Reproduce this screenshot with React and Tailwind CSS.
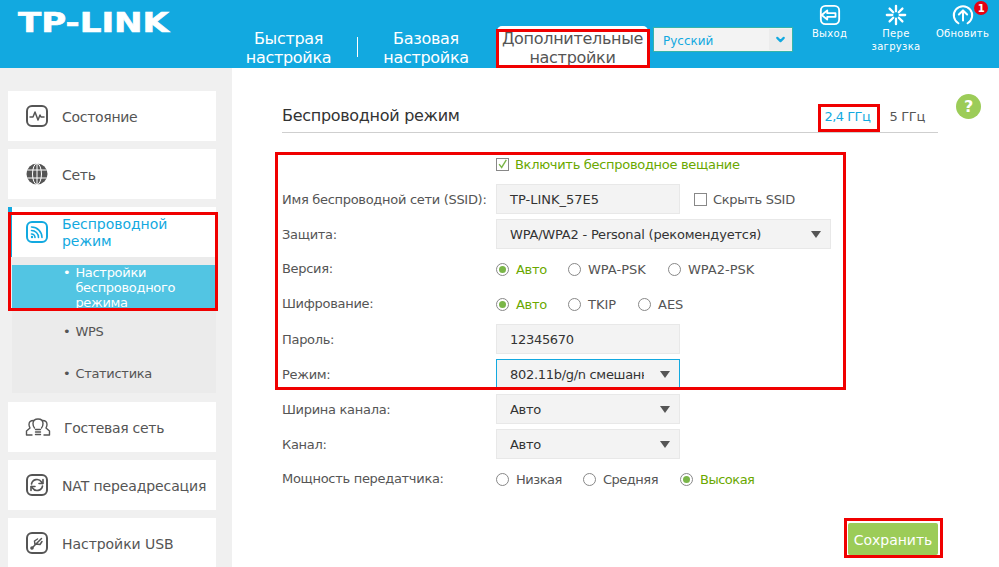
import { ChevronDown } from 'lucide-react'

const IconBox = ({ size = 24, className = '', children }) => (
  <svg width={size} height={size} viewBox="0 0 24 24" fill="none" stroke="currentColor" strokeWidth="2" strokeLinecap="round" strokeLinejoin="round" className={className}>
    {children}
  </svg>
)

const StatusIcon = () => (
  <IconBox>
    <rect x="2" y="2" width="20" height="20" rx="5" />
    <path d="M5 13h3l2-5 3 8 2-5 1 2h3" strokeWidth="1.5" />
  </IconBox>
)

const GlobeIcon = () => (
  <IconBox>
    <circle cx="12" cy="12" r="10.500" fill="currentColor" stroke="none" />
    <g stroke="#fff" strokeWidth="1">
      <ellipse cx="12" cy="12" rx="4.500" ry="10.500" />
      <path d="M12 1.500v21M2.500 8h19M2.500 16h19" />
    </g>
  </IconBox>
)

const WifiIcon = () => (
  <IconBox>
    <rect x="2" y="2" width="20" height="20" rx="5" />
    <path d="M6.500 10.500a7 7 0 0 1 7 7M6.500 7a10.500 10.500 0 0 1 10.500 10.500M6.500 14a3.500 3.500 0 0 1 3.500 3.500" strokeWidth="1.600" />
    <circle cx="7" cy="17" r="1.200" fill="currentColor" stroke="none" />
  </IconBox>
)

const GuestIcon = () => (
  <svg width="26" height="18" viewBox="0 0 26 18" fill="none" stroke="currentColor" strokeWidth="1.400" strokeLinecap="round" strokeLinejoin="round">
    <path d="M9.500 10C8.500 9 8 7.500 8 5.500 8 2.500 10 1 13 1s5 1.500 5 4.500c0 2-.5 3.500-1.500 4.500" />
    <path d="M8.500 2.500C5.500 2.500 4 4 4 6.500c0 1.500.5 2.500 1 3.500L1.500 13v4H7" />
    <path d="M17.500 2.500c3 0 4.500 1.500 4.500 4 0 1.500-.5 2.500-1 3.500l3.500 3v4H19" />
    <path d="M10.500 11.500h5M10.500 14h5M10.500 16.500h5" />
  </svg>
)

const NatIcon = () => (
  <IconBox>
    <rect x="2" y="2" width="20" height="20" rx="5" />
    <path d="M6.500 11a5.500 5.500 0 0 1 10-2l1 1.500M17.500 13a5.500 5.500 0 0 1-10 2l-1-1.500" strokeWidth="1.600" />
    <path d="M18 6.500v4h-4M6 17.500v-4h4" strokeWidth="1.600" />
  </IconBox>
)

const UsbIcon = () => (
  <IconBox>
    <rect x="2" y="2" width="20" height="20" rx="5" />
    <path d="M6.500 17.500 16.500 7.500M10 14l-.5-4 3-2M11 13l4 .5 2-3" strokeWidth="1.500" />
    <circle cx="7" cy="17" r="1.800" fill="currentColor" stroke="none" />
  </IconBox>
)

const menuItems = [
  { label: 'Состояние', icon: StatusIcon },
  { label: 'Сеть', icon: GlobeIcon },
]

const menuItemsBottom = [
  { label: 'Гостевая сеть', icon: GuestIcon, gap: 'ml-[13px]' },
  { label: 'NAT переадресация', icon: NatIcon, gap: 'ml-[13px] tracking-[-0.12px]' },
  { label: 'Настройки USB', icon: UsbIcon, gap: 'ml-[13px] tracking-[-0.05px]' },
]

function MenuItem({ item }) {
  const Icon = item.icon
  return (
    <div className="flex items-center h-[50px] mb-[8px] bg-white pl-[17px] ml-[8px] text-[#555]">
      <Icon />
      <span className={`${item.gap || 'ml-[13px]'} text-[14px] pt-[2px]`}>{item.label}</span>
    </div>
  )
}

function Sidebar() {
  return (
    <aside className="w-[232px] shrink-0 bg-[#f0f0f0] pt-[23px] pr-[16px]">
      {menuItems.map((item) => <MenuItem key={item.label} item={item} />)}
      <div className="ml-[8px] mb-[9px]">
        <div className="flex items-center h-[50px] bg-white border-l-4 border-[#12a9e0] pl-[13px] text-[#12a9e0]">
          <WifiIcon />
          <span className="ml-[13px] text-[14px] leading-[17px] tracking-[-0.05px] pt-[2px]">Беспроводной<br />режим</span>
        </div>
        <div className="ml-[4px] h-[136px] bg-[#ebebeb] pt-[8px] text-[13px] text-[#555]">
          <div className="flex h-[46px] bg-[#52c5e3] text-white pl-[51px] leading-[15px]">
            <span className="mr-[5px]">•</span>
            <span>Настройки<br />беспроводного<br />режима</span>
          </div>
          <div className="flex items-center h-[42px] pl-[51px]"><span className="mr-[5px]">•</span>WPS</div>
          <div className="flex items-center h-[42px] pl-[51px]"><span className="mr-[5px]">•</span>Статистика</div>
        </div>
      </div>
      {menuItemsBottom.map((item) => <MenuItem key={item.label} item={item} />)}
    </aside>
  )
}

function Field({ label, raised, children }) {
  return (
    <div className="flex items-center h-[35px]">
      <div className={`w-[214px] shrink-0 text-[13px] text-[#555] ${raised ? 'pb-[2px]' : ''}`}>{label}</div>
      {children}
    </div>
  )
}

function Input({ value, className = '' }) {
  return (
    <div className={`flex items-center w-[184px] h-[30px] mb-[1px] bg-[#f3f3f3] border border-[#e8e8e8] pl-[13px] pt-[2px] text-[13px] text-[#333] ${className}`}>
      {value}
    </div>
  )
}

function Select({ value, wide, focused }) {
  return (
    <div className={`flex items-center justify-between h-[30px] mb-[1px] bg-[#f3f3f3] border pl-[13px] pr-[9px] text-[13px] text-[#333] ${wide ? 'w-[335px] tracking-[-0.2px]' : 'w-[184px]'} ${focused ? 'border-[#12a9e0]' : 'border-[#e8e8e8]'}`}>
      <span className={`overflow-hidden whitespace-nowrap pt-[2px] ${wide ? '' : 'w-[134px]'}`}>{value}</span>
      <span className="w-0 h-0 border-x-[5.500px] border-x-transparent border-t-[7px] border-t-[#555]" />
    </div>
  )
}

function Radio({ label, checked, className = '' }) {
  return (
    <div className={`flex items-center text-[13px] ${checked ? 'text-[#6aa800]' : 'text-[#555]'} ${className}`}>
      <span className="flex items-center justify-center w-[13px] h-[13px] rounded-full border border-[#888] bg-white mr-[7px]">
        {checked && <span className="w-[7px] h-[7px] rounded-full bg-[#7ab648]" />}
      </span>
      {label}
    </div>
  )
}

function Header() {
  return (
    <header className="relative flex h-[68px] bg-[#12a9e0] text-white">
      <div className="w-[232px] pl-[18px] pt-[4px]">
        <span className="block origin-left scale-x-[1.31] font-bold text-[26px] leading-[38px] tracking-normal whitespace-nowrap [-webkit-text-stroke:0.6px_white]">TP-LINK</span>
      </div>
      <nav className="flex items-end text-[16px] leading-[19px] text-center">
        <div className="w-[113px] pb-[1px]">Быстрая<br />настройка</div>
        <div className="w-px h-[20px] ml-[12px] bg-white mb-[11px]" />
        <div className="w-[136px] pb-[1px]">Базовая<br />настройка</div>
        <div className="w-[151px] h-[42px] ml-[3px] bg-white text-[#555] rounded-t-[5px] pt-[3px]">Дополнительные<br />настройки</div>
      </nav>
      <div className="flex items-center justify-between w-[140px] h-[25px] mt-[27px] ml-[5px] bg-[#f3f3f3] border border-[#37b4a8] pl-[9px] text-[12px] tracking-normal text-[#12a9e0]">
        <span className="pt-[2px]">Русский</span>
        <span className="flex items-center justify-center w-[23px] h-[21px] bg-[#ececec]">
          <ChevronDown size={13} strokeWidth={4} />
        </span>
      </div>
      <div className="flex text-[10px] leading-[13px] text-center tracking-[0.3px]">
        <div className="w-[73px] pt-[4px] flex flex-col items-center">
          <IconBox size={22}>
            <rect x="2" y="2" width="20" height="20" rx="5" />
            <path d="M3 12l6-5v3h9v4H9v3z" fill="#12a9e0" />
          </IconBox>
          <span className="mt-[1px]">Выход</span>
        </div>
        <div className="w-[60px] pt-[4px] flex flex-col items-center">
          <IconBox size={22}>
            <path strokeWidth="2.500" d="M12 2v6M12 16v6M2 12h6M16 12h6M5 5l4 4M15 15l4 4M19 5l-4 4M9 15l-4 4" />
          </IconBox>
          <span className="mt-[1px]">Пере<br />загрузка</span>
        </div>
        <div className="w-[73px] pt-[4px] flex flex-col items-center">
          <IconBox size={22}>
            <path strokeWidth="2.200" d="M7 21a10 10 0 1 1 10 0" />
            <path strokeWidth="2.200" d="M12 18V7M7.500 11.500 12 7l4.500 4.500" />
          </IconBox>
          <span className="mt-[1px]">Обновить</span>
        </div>
      </div>
      <span className="absolute left-[974px] top-[1px] flex items-center justify-center w-[14px] h-[14px] rounded-full bg-[#e60012] text-[10px] font-bold">1</span>
    </header>
  )
}

function Main() {
  return (
    <main className="relative flex-1 pl-[50px] pr-[61px] pt-[32px]">
      <div className="flex items-center justify-between h-[33px] border-b border-[#cfcfcf]">
        <h1 className="text-[16px] text-[#333]">Беспроводной режим</h1>
        <div className="flex items-center text-[13px] pt-[2px] pr-[13px]">
          <span className="text-[#12a9e0] tracking-[-0.5px]">2,4 ГГц</span>
          <span className="w-px h-[11px] bg-[#6a6ad0] mx-[9px]" />
          <span className="text-[#555]">5 ГГц</span>
        </div>
      </div>
      <span className="absolute left-[724px] top-[26px] flex items-center justify-center w-[25px] h-[25px] rounded-full bg-[#9ccc58] text-white font-bold text-[16px]">?</span>

      <div className="mt-[14px]">
        <Field>
          <div className="flex items-center text-[13px] text-[#6aa800]">
            <span className="flex items-center justify-center w-[13px] h-[13px] border border-[#888] mr-[6px]">
              <svg width="13" height="13" viewBox="0 0 13 13" fill="none" stroke="#7ab648" strokeWidth="1.600"><path d="M2.500 6l3 4L11 1" /></svg>
            </span>
            Включить беспроводное вещание
          </div>
        </Field>
        <Field label="Имя беспроводной сети (SSID):">
          <Input value="TP-LINK_57E5" className="tracking-normal" />
          <div className="flex items-center ml-[14px] text-[13px] text-[#555]">
            <span className="w-[13px] h-[13px] border border-[#888] mr-[6px]" />
            Скрыть SSID
          </div>
        </Field>
        <Field label="Защита:"><Select wide value="WPA/WPA2 - Personal (рекомендуется)" /></Field>
        <Field raised label="Версия:">
          <Radio checked label="Авто" className="w-[72px]" />
          <Radio label="WPA-PSK" className="w-[100px] tracking-normal" />
          <Radio label="WPA2-PSK" className="tracking-normal" />
        </Field>
        <Field raised label="Шифрование:">
          <Radio checked label="Авто" className="w-[72px]" />
          <Radio label="TKIP" className="w-[70px] tracking-normal" />
          <Radio label="AES" className="tracking-normal" />
        </Field>
        <Field label="Пароль:"><Input value="12345670" /></Field>
        <Field label="Режим:"><Select focused value="802.11b/g/n смешанный" /></Field>
        <Field label="Ширина канала:"><Select value="Авто" /></Field>
        <Field label="Канал:"><Select value="Авто" /></Field>
        <Field raised label="Мощность передатчика:">
          <Radio label="Низкая" className="w-[87px] tracking-[-0.5px]" />
          <Radio label="Средняя" className="w-[97px] tracking-[-0.5px]" />
          <Radio checked label="Высокая" className="tracking-[-0.5px]" />
        </Field>
      </div>

      <div className="flex justify-end mt-[26px]">
        <button className="w-[90px] h-[32px] bg-[#9ccc58] text-white text-[14px] tracking-normal rounded-[2px] pt-[3px]">Сохранить</button>
      </div>
    </main>
  )
}

// red annotation frames drawn over the screenshot
const frames = [
  'left-[496px] top-[29px] w-[154px] h-[39px]',
  'left-[818px] top-[104px] w-[62px] h-[28px]',
  'left-[8px] top-[212px] w-[210px] h-[99px]',
  'left-[275px] top-[152px] w-[571px] h-[238px]',
  'left-[844px] top-[518px] w-[99px] h-[40px]',
]

export default function App() {
  return (
    <div className="relative w-[999px] h-[567px] overflow-hidden bg-white tracking-[-0.3px] font-['DejaVu_Sans',sans-serif]">
      <Header />
      <div className="flex h-[499px]">
        <Sidebar />
        <Main />
      </div>
      {frames.map((f) => (
        <div key={f} className={`absolute border-[3px] border-[#f00000] ${f}`} />
      ))}
    </div>
  )
}
